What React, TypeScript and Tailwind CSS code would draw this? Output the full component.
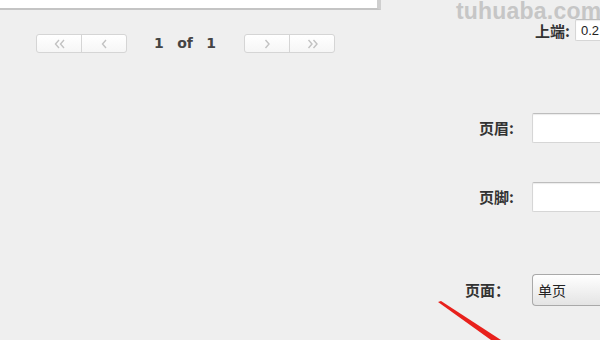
import React from "react";

const cjk = { fontFamily: '"Noto Sans CJK SC", "Noto Sans", sans-serif' };

function Chevron({ dir, double }: { dir: "left" | "right"; double?: boolean }) {
  const one = dir === "left" ? "M6 2 L2.5 6 L6 10" : "M2.5 2 L6 6 L2.5 10";
  return (
    <svg width={double ? 13 : 9} height="12" viewBox={double ? "0 0 13 12" : "0 0 9 12"} fill="none">
      <path d={one} stroke="#c2c2c2" strokeWidth="1.4" />
      {double && <path d={one} transform="translate(5 0)" stroke="#c2c2c2" strokeWidth="1.4" />}
    </svg>
  );
}

function PagerGroup({ dir }: { dir: "left" | "right" }) {
  const first = dir === "left" ? <Chevron dir="left" double /> : <Chevron dir="right" />;
  const second = dir === "left" ? <Chevron dir="left" /> : <Chevron dir="right" double />;
  return (
    <div className="flex h-[19px] w-[91px] overflow-hidden rounded-[3px] border border-[#d5d5d5] bg-gradient-to-b from-white to-[#f6f6f6]">
      <div className="flex flex-1 items-center justify-center border-r border-[#d5d5d5]">{first}</div>
      <div className="flex flex-1 items-center justify-center">{second}</div>
    </div>
  );
}

function Field({ w, h, children }: { w: string; h: string; children?: React.ReactNode }) {
  return (
    <div
      className={`${w} ${h} flex shrink-0 items-center rounded-l-[2px] border border-r-0 border-[#d6d6d6] border-t-[#bdbdbd] bg-white pl-[5px] shadow-[inset_0_1px_1px_rgba(0,0,0,0.08)]`}
    >
      {children}
    </div>
  );
}

export default function App() {
  return (
    <div className="relative flex h-[340px] w-[600px] overflow-hidden bg-[#efefef] text-[#333]">
      {/* left: preview + pager */}
      <div className="flex w-[440px] shrink-0 flex-col">
        <div className="h-[10px] w-[381px] border-b-2 border-r-[4px] border-b-[#c4c4c4] border-r-[#cfcfcf] bg-white" />
        <div className="ml-[36px] mt-[23px] flex items-center">
          <PagerGroup dir="left" />
          <div
            className="ml-[27px] flex w-[62px] items-center justify-between text-[14px] font-bold text-[#444]"
            style={{ fontFamily: '"DejaVu Sans", sans-serif' }}
          >
            <span>1</span>
            <span>of</span>
            <span>1</span>
          </div>
          <div className="ml-[28px]">
            <PagerGroup dir="right" />
          </div>
        </div>
      </div>

      {/* right: settings */}
      <div className="flex w-[200px] shrink-0 flex-col text-[15px] font-bold leading-[20px]" style={cjk}>
        <div className="mt-[19px] flex items-center">
          <span className="w-[130px] shrink-0 text-right leading-none">上端:</span>
          <div className="ml-[5px]">
            <Field w="w-[40px]" h="h-[22px]">
              <span
                className="text-[13px] font-normal leading-none text-[#222]"
                style={{ fontFamily: '"Liberation Sans", sans-serif' }}
              >
                0.2
              </span>
            </Field>
          </div>
        </div>

        <div className="mt-[72px] flex items-center">
          <span className="w-[74px] shrink-0 text-right">页眉:</span>
          <div className="ml-[18px]">
            <Field w="w-[80px]" h="h-[30px]" />
          </div>
        </div>

        <div className="mt-[39px] flex items-center">
          <span className="w-[74px] shrink-0 text-right">页脚:</span>
          <div className="ml-[18px]">
            <Field w="w-[80px]" h="h-[30px]" />
          </div>
        </div>

        <div className="mt-[62px] flex items-center">
          <span className="w-[70px] shrink-0 text-right">页面：</span>
          <div className="ml-[22px] flex h-[32px] w-[80px] shrink-0 items-center rounded-l-[4px] border border-r-0 border-[#a9a9a9] bg-gradient-to-b from-white to-[#e4e4e4] pl-[5px] text-[14px] font-normal text-[#222]">
            单页
          </div>
        </div>
      </div>

      {/* watermark */}
      <div
        className="pointer-events-none absolute left-[456px] top-0 text-[23px] font-bold leading-none tracking-[0.2px] text-[#c6c6c6]"
        style={{ fontFamily: '"Liberation Sans", Arial, sans-serif' }}
      >
        tuhuaba.com
      </div>

      {/* red arrow */}
      <svg className="pointer-events-none absolute left-0 top-0" width="600" height="340">
        <polygon points="438,302 441,301 501,340 491,340" fill="#e8211c" />
      </svg>
    </div>
  );
}
